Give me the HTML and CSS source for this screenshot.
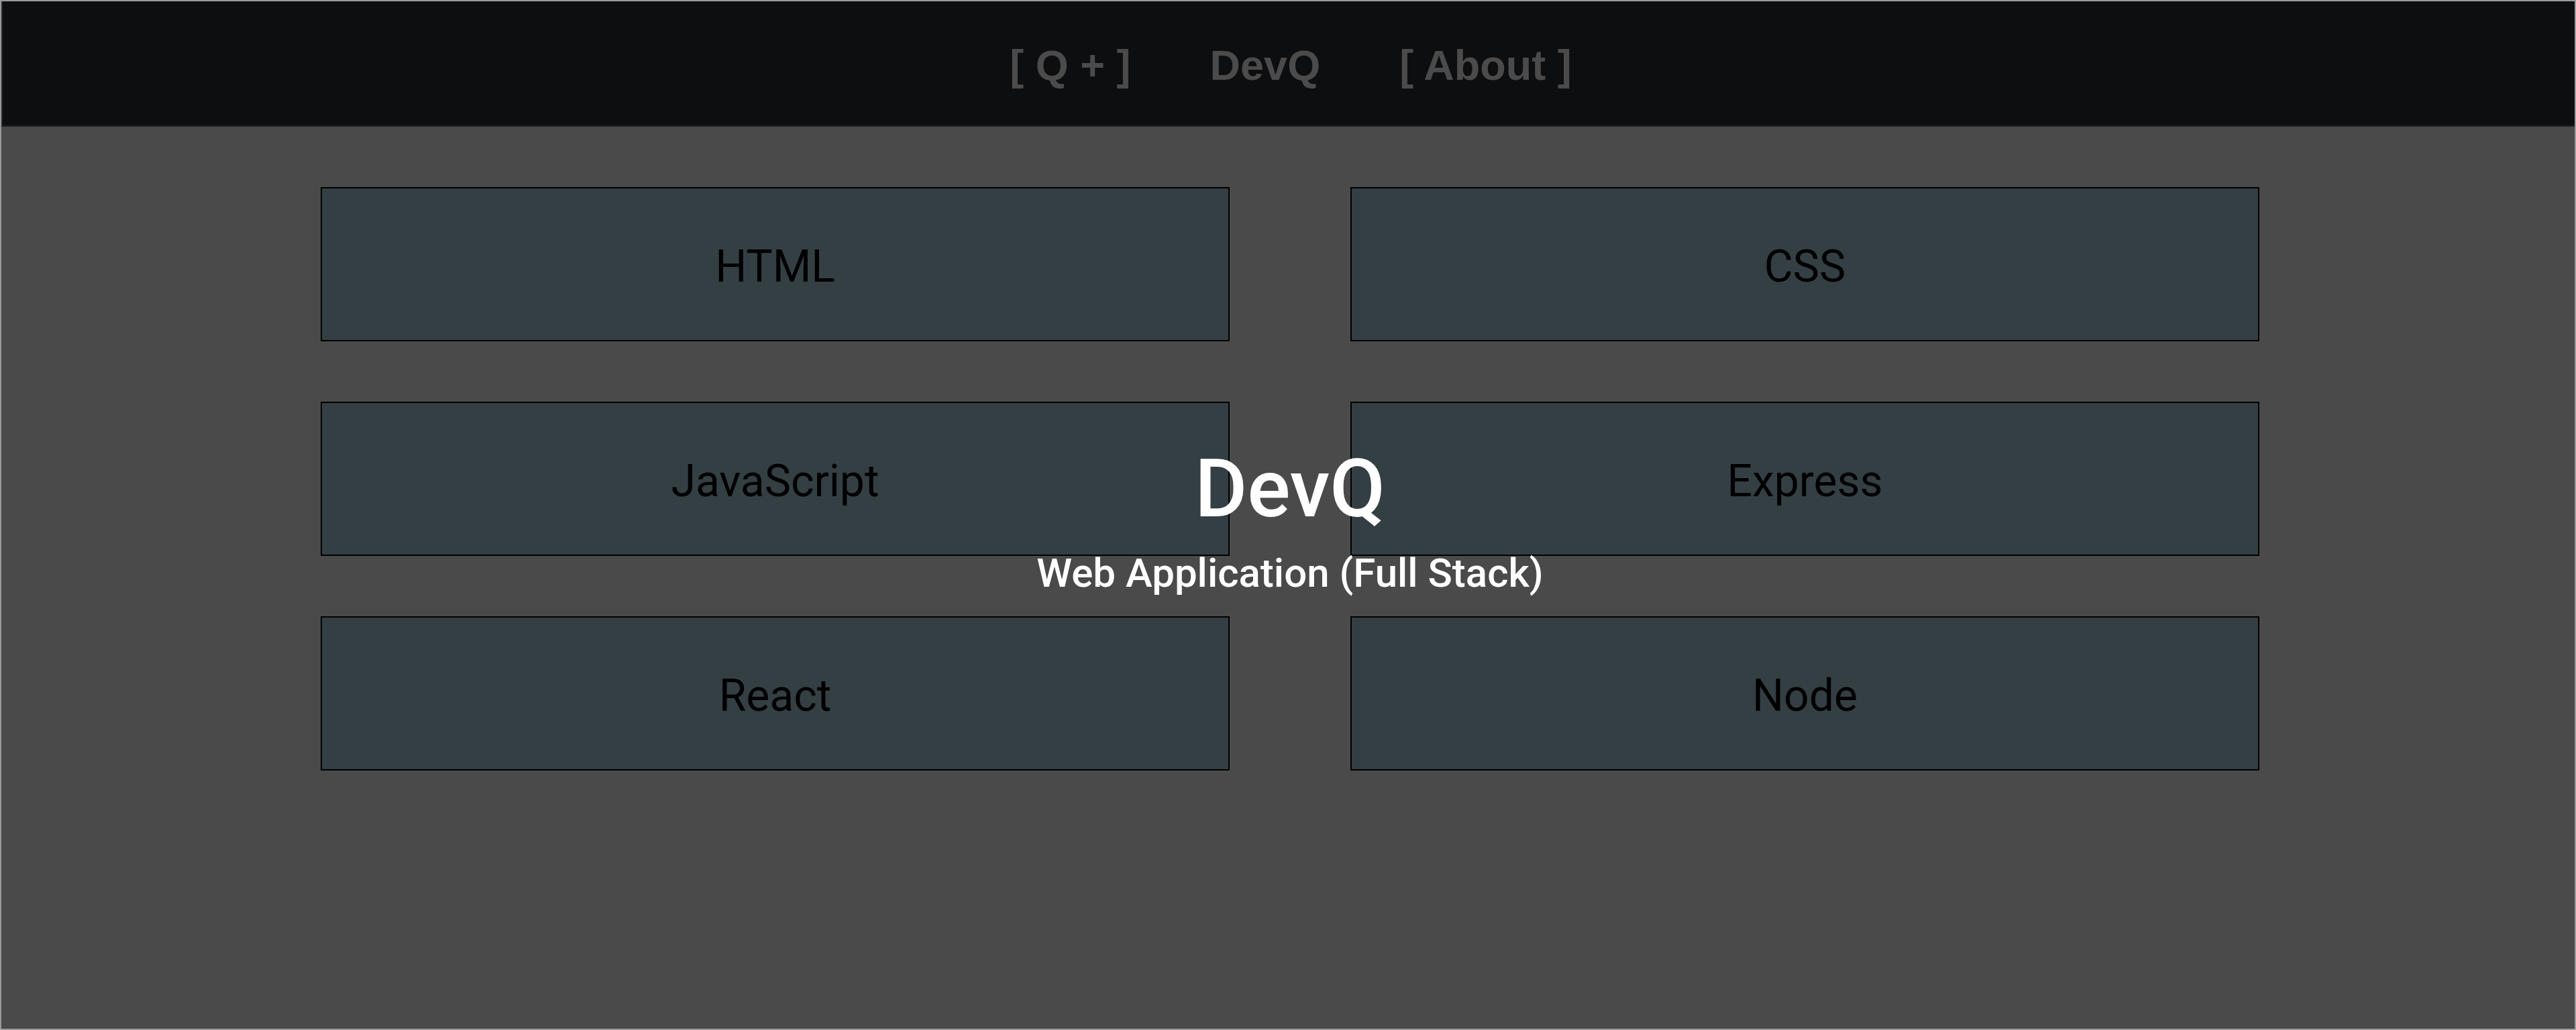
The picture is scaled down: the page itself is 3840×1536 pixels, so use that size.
FILE: index.html
```html
<!DOCTYPE html>
<html lang="en">
<head>
<meta charset="utf-8">
<title>DevQ</title>
<link rel="stylesheet" href="styles.css">
</head>
<body>
<div class="frame">
  <header class="topbar">
    <nav class="nav">
      <a class="nav-link" href="#">[ Q + ]</a>
      <a class="nav-link" href="#">DevQ</a>
      <a class="nav-link" href="#">[ About ]</a>
    </nav>
  </header>
  <main class="main">
    <div class="board">
      <div class="grid">
        <div class="card">HTML</div>
        <div class="card">CSS</div>
        <div class="card">JavaScript</div>
        <div class="card">Express</div>
        <div class="card">React</div>
        <div class="card">Node</div>
      </div>
      <div class="hero">
        <h1 class="hero-title">DevQ</h1>
        <p class="hero-sub">Web Application (Full Stack)</p>
      </div>
    </div>
  </main>
</div>
</body>
</html>
```
FILE: styles.css
```css
* { box-sizing: border-box; }
html, body {
  margin: 0;
  padding: 0;
  background: #4a4a4a;
}
body {
  font-family: Roboto, "Liberation Sans", sans-serif;
}
.frame {
  width: 3840px;
  height: 1536px;
  border: 2px solid #9a9a9a;
  background: #4a4a4a;
  display: flex;
  flex-direction: column;
}
.topbar {
  height: 187px;
  background: #0d0e10;
  border-left: 2px solid #262626;
  border-bottom: 2px solid #222324;
  display: flex;
  align-items: center;
  justify-content: center;
  padding-left: 6px;
  padding-top: 6px;
}
.nav {
  display: flex;
  gap: 118px;
  align-items: center;
}
.nav-link {
  font-family: "Liberation Sans", Arial, sans-serif;
  color: #4b4b4b;
  font-weight: 700;
  font-size: 63px;
  text-decoration: none;
  line-height: 1;
}
.main {
  flex: 1;
  padding-top: 90px;
  padding-left: 6px;
}
.board {
  position: relative;
}
.grid {
  display: grid;
  grid-template-columns: 1355px 1355px;
  grid-auto-rows: 230px;
  column-gap: 180px;
  row-gap: 90px;
  justify-content: center;
}
.card {
  background: #343f44;
  border: 2px solid #000;
  display: flex;
  align-items: center;
  justify-content: center;
  padding-top: 6px;
  font-size: 66px;
  color: #000;
}
.hero {
  position: absolute;
  top: 390px;
  left: 0;
  right: 0;
  display: flex;
  flex-direction: column;
  align-items: center;
  color: #fff;
}
.hero-title {
  margin: 0;
  font-size: 120px;
  font-weight: 500;
  line-height: 1;
}
.hero-sub {
  margin: 36px 0 0;
  font-size: 60px;
  font-weight: 500;
  line-height: 1;
}
```
